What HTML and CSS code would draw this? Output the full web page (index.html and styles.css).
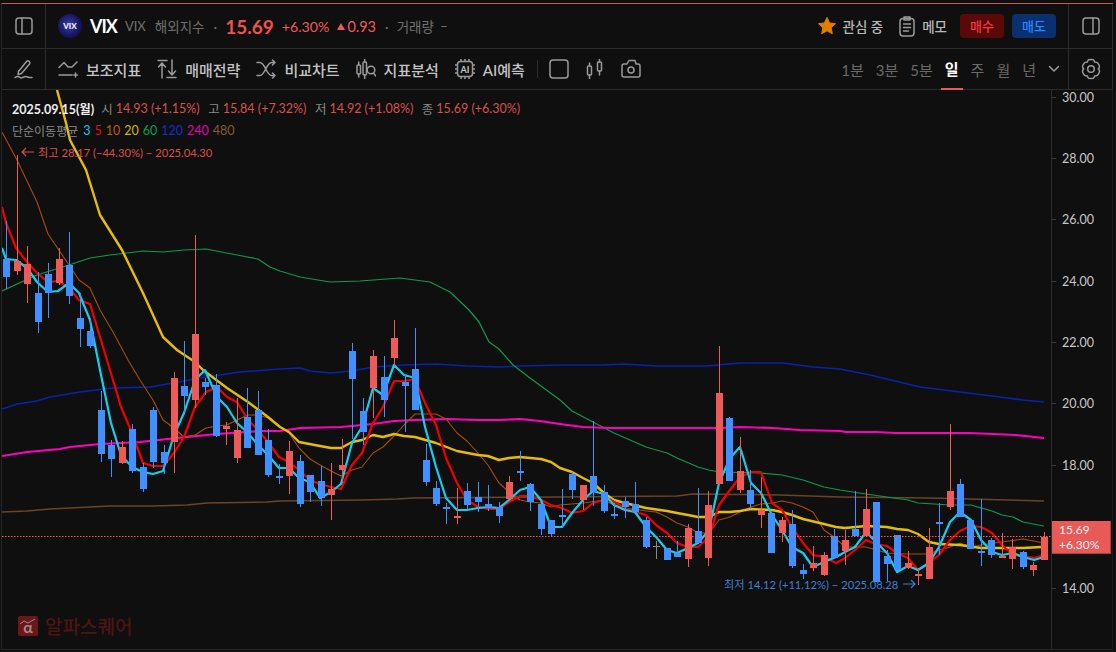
FILE: index.html
```html
<!DOCTYPE html>
<html lang="ko">
<head>
    <meta charset="UTF-8">
    <title>VIX 차트</title>
    <link rel="stylesheet" href="styles.css">
</head>
<body>
<div class="app">

    <header class="row row-info">
        <div class="side-cell">
            <svg class="icon" width="18" height="18" viewBox="0 0 18 18"><rect x="1" y="1" width="16" height="16" rx="3"/><path d="M7 1v16"/></svg>
        </div>
        <div class="row-main">
            <div class="logo">VIX</div>
            <span class="symbol">VIX</span>
            <span class="sub sub-name">VIX</span>
            <span class="sub sub-type">해외지수</span>
            <span class="dot">·</span>
            <span class="price">15.69</span>
            <span class="change">+6.30%</span>
            <span class="tri"></span>
            <span class="diff">0.93</span>
            <span class="dot dot-vol">·</span>
            <span class="sub">거래량</span>
            <span class="sub sub-dash">–</span>
            <div class="spacer"></div>
            <svg class="star" width="20" height="20" viewBox="0 0 20 20"><path d="M10 1.5l2.6 5.4 5.9.8-4.3 4.1 1.1 5.9-5.3-2.9-5.3 2.9 1.1-5.9L1.5 7.700l5.900-.8z"/></svg>
            <span class="head-link watch">관심 중</span>
            <svg class="icon memo-icon" width="16" height="21" viewBox="0 0 16 21"><rect x="1" y="2.500" width="14" height="17.500" rx="3"/><path d="M5 1h6v3H5zM4.500 8h7M4.500 11.500h7M4.500 15h5"/></svg>
            <span class="head-link memo">메모</span>
            <span class="order buy">매수</span>
            <span class="order sell">매도</span>
        </div>
        <div class="side-cell side-right">
            <svg class="icon" width="18" height="18" viewBox="0 0 18 18"><rect x="1" y="1" width="16" height="16" rx="3"/><path d="M11 1v16"/></svg>
        </div>
    </header>

    <nav class="row row-tools">
        <div class="side-cell">
            <svg class="icon" width="20" height="20" viewBox="0 0 20 20"><path d="M4.500 12.500L12.500 2.500c.8-.8 2-.8 2.800 0s.8 1.800.2 2.600L7.500 14.500l-3.500 1z"/><path d="M1 18.500c2-1.500 3.500-1.500 5 0s3.500-1 5.500-1 3 1.500 6.500 1"/></svg>
        </div>
        <div class="row-main">
            <div class="tool">
                <svg class="icon" width="20" height="20" viewBox="0 0 20 20"><path d="M1 8.500L6 3.500 10 8h4l5-5M1 16h13M15.500 16h4M17.500 14v4"/></svg>
                <span>보조지표</span>
            </div>
            <div class="tool">
                <svg class="icon" width="20" height="20" viewBox="0 0 20 20"><path d="M1 1.500h9M5 19V4M1.500 8L5 4l3.500 4M10 18.500h9M15 16V1M11.500 12l3.500 4 3.500-4"/></svg>
                <span>매매전략</span>
            </div>
            <div class="tool">
                <svg class="icon" width="20" height="20" viewBox="0 0 20 20"><path d="M1 3.500h3c5 0 6.500 13 11.500 13H19M1 16.500h3c5 0 6.500-13 11.500-13H19M16.500 1L19 3.500 16.500 6M16.500 14l2.500 2.500-2.500 2.500"/></svg>
                <span>비교차트</span>
            </div>
            <div class="tool">
                <svg class="icon" width="20" height="20" viewBox="0 0 20 20"><rect x="1" y="6" width="3.500" height="9" rx="1"/><path d="M2.700 3v3M2.700 15v3"/><rect x="7" y="3" width="3.500" height="13" rx="1"/><path d="M8.700 0v3M8.700 16v4"/><circle cx="15" cy="11" r="3.800"/><path d="M17.500 14l2.300 3"/></svg>
                <span>지표분석</span>
            </div>
            <div class="tool">
                <svg class="icon ai-icon" width="20" height="20" viewBox="0 0 20 20"><rect x="2.500" y="2.500" width="15" height="15" rx="3"/><path d="M0 6h2M0 10h2M0 14h2M18 6h2M18 10h2M18 14h2M6 0v2M10 0v2M14 0v2M6 18v2M10 18v2M14 18v2"/><text x="10" y="13.500" text-anchor="middle">AI</text></svg>
                <span>AI예측</span>
            </div>
            <i class="tool-sep"></i>
            <svg class="icon plain" width="20" height="20" viewBox="0 0 20 20"><rect x="1" y="1" width="18" height="18" rx="3"/></svg>
            <svg class="icon plain" width="18" height="20" viewBox="0 0 18 20"><rect x="1.500" y="7" width="4" height="9" rx="1"/><path d="M3.500 4v3M3.500 16v4"/><rect x="11.500" y="3" width="4" height="9" rx="1"/><path d="M13.500 0v3M13.500 12v4"/></svg>
            <svg class="icon plain" width="20" height="20" viewBox="0 0 20 20"><path d="M3 5h3l2-3.500h6l1 3.500h2c1.200 0 2 .8 2 2v9c0 1.200-.8 2-2 2H3c-1.200 0-2-.8-2-2V7c0-1.200.8-2 2-2z"/><circle cx="10" cy="11" r="3"/></svg>
            <div class="spacer"></div>
            <div class="periods">
                <span>1분</span>
                <span>3분</span>
                <span>5분</span>
                <span class="on">일</span>
                <span>주</span>
                <span>월</span>
                <span>년</span>
            </div>
            <svg class="icon chevron" width="12" height="8" viewBox="0 0 12 8"><path d="M1.500 1.500L6 6l4.500-4.500"/></svg>
        </div>
        <div class="side-cell side-right">
            <svg class="icon" width="20" height="22" viewBox="0 0 20 22"><path d="M7 2.300c.4-1.200 5.600-1.200 6 0l.6 1.600 1.800.3c1.300-.1 3.800 4.200 3 5.300L17.300 11l1.100 1.500c.8 1.100-1.700 5.400-3 5.300l-1.800.3-.6 1.600c-.4 1.200-5.600 1.200-6 0l-.6-1.600-1.800-.3c-1.300.1-3.800-4.200-3-5.300L2.700 11 1.600 9.500c-.8-1.100 1.700-5.400 3-5.300l1.800-.3z"/><circle cx="10" cy="11" r="3.300"/></svg>
        </div>
    </nav>

    <main class="chart-wrap">
        <svg id="chart" width="1111" height="559" viewBox="2 90 1111 559"></svg>

        <div class="legend">
            <div class="legend-row">
                <b class="date">2025.09.15(월)</b>
                <span class="lbl">시</span><span class="up">14.93 (+1.15%)</span>
                <span class="lbl">고</span><span class="up">15.84 (+7.32%)</span>
                <span class="lbl">저</span><span class="up">14.92 (+1.08%)</span>
                <span class="lbl">종</span><span class="up">15.69 (+6.30%)</span>
            </div>
            <div class="legend-row ma-row">
                <span class="lbl">단순이동평균</span>
                <span class="ma3">3</span>
                <span class="ma5">5</span>
                <span class="ma10">10</span>
                <span class="ma20">20</span>
                <span class="ma60">60</span>
                <span class="ma120">120</span>
                <span class="ma240">240</span>
                <span class="ma480">480</span>
            </div>
            <div class="legend-row high-note">
                <svg class="note-arrow" width="13" height="10" viewBox="0 0 13 10"><path d="M13 5H1M5 1L1 5l4 4"/></svg>
                <span>최고 28.17 (−44.30%) − 2025.04.30</span>
            </div>
        </div>

        <div class="low-note">
            <span>최저 14.12 (+11.12%) − 2025.08.28</span>
            <svg class="note-arrow" width="13" height="10" viewBox="0 0 13 10"><path d="M0 5h12M8 1l4 4-4 4"/></svg>
        </div>

        <div class="watermark">
            <div class="mark">
                <svg width="20" height="20" viewBox="0 0 20 20"><path d="M2 8l4-3 4 2 7-4"/></svg>
                <span>α</span>
            </div>
            <span class="mark-name">알파스퀘어</span>
        </div>

        <div class="price-tag">15.69<br>+6.30%</div>
    </main>
</div>
<script src="chart.js"></script>
</body>
</html>
```

FILE: styles.css
```css
* {
    box-sizing: border-box;
}
html, body {
    margin: 0;
    height: 100%;
    background-color: #0f0f0f;
    overflow: hidden;
}
body {
    padding-top: 3px;
    font-family: Lato, "Noto Sans CJK KR", sans-serif;
    color: #bbb;
}
.app {
    width: 1112px;
    height: 647px;
    margin-left: 1px;
    border-top: 1px solid #c65a50;
    border-left: 1px solid #262626;
    border-bottom: 1px solid #262626;
}
.row {
    display: flex;
    align-items: stretch;
    border-bottom: 1px solid #2c2c2c;
}
.row-info {
    height: 45px;
}
.row-tools {
    height: 41px;
}
.side-cell {
    flex: 0 0 44px;
    display: flex;
    align-items: center;
    justify-content: center;
    border-right: 1px solid #2c2c2c;
}
.side-right {
    border-right: 1px solid #2c2c2c;
    border-left: 1px solid #2c2c2c;
    flex-basis: 45px;
}
.row-main {
    flex: 1;
    display: flex;
    align-items: center;
    padding: 0 12px 0 12px;
}
.spacer {
    flex: 1;
}
.icon {
    fill: none;
    stroke: #9a9a9a;
    stroke-width: 1.5;
    stroke-linecap: round;
    stroke-linejoin: round;
    flex: none;
}

/* top row */
.logo {
    width: 24px;
    height: 24px;
    border-radius: 50%;
    background: radial-gradient(circle at 45% 45%, #3a3f9e, #15155e 60%, #0b0b38);
    color: #eee;
    font-size: 8px;
    font-weight: 900;
    line-height: 24px;
    text-align: center;
}
.symbol {
    margin-left: 8px;
    color: #fff;
    font-size: 18px;
    font-weight: 700;
    letter-spacing: -1px;
}
.sub {
    color: #6f6f6f;
    font-size: 13.5px;
}
.sub-name {
    margin-left: 8px;
    font-size: 13px;
}
.sub-type {
    margin-left: 9px;
}
.sub-dash {
    margin-left: 6px;
}
.dot {
    margin: 0 8px 0 9px;
    color: #6f6f6f;
    font-size: 14px;
}
.dot-vol {
    margin: 0 8px 0 9px;
}
.price {
    color: #f05050;
    font-size: 19px;
    font-weight: 700;
}
.change {
    margin-left: 8px;
    color: #ee5a5a;
    font-size: 14.2px;
}
.tri {
    margin-left: 8px;
    border-left: 4.5px solid transparent;
    border-right: 4.5px solid transparent;
    border-bottom: 7px solid #ee5a5a;
}
.diff {
    margin-left: 2px;
    color: #ee5a5a;
    font-size: 14.5px;
}
.star {
    fill: #e27d00;
    stroke: #e27d00;
    stroke-linejoin: round;
}
.head-link {
    margin-left: 5px;
    color: #b8b8b8;
    font-size: 13.5px;
    font-weight: 500;
}
.memo-icon {
    margin-left: 16px;
}
.memo {
    margin-left: 7px;
}
.order {
    width: 44px;
    height: 24px;
    border-radius: 4px;
    font-size: 13px;
    font-weight: 500;
    line-height: 24px;
    text-align: center;
}
.buy {
    margin-left: 13px;
    background-color: #5a0808;
    color: #f23c3c;
}
.sell {
    margin-left: 8px;
    background-color: #0a3070;
    color: #2b86ff;
}

/* tool row */
.tool {
    display: flex;
    align-items: center;
    gap: 8px;
    margin-right: 16px;
    color: #c4c4c4;
    font-size: 15px;
    font-weight: 500;
}
.ai-icon text {
    fill: #c4c4c4;
    stroke: none;
    font-family: Lato, sans-serif;
    font-size: 9px;
    font-weight: 700;
}
.tool-sep {
    width: 1px;
    height: 18px;
    margin-right: 11px;
    margin-left: -4px;
    background-color: #2c2c2c;
}
.plain {
    margin-right: 17px;
}
.periods {
    display: flex;
    align-self: stretch;
    gap: 4px;
    margin-right: 8px;
}
.periods span {
    display: flex;
    align-items: center;
    justify-content: center;
    padding: 0 4px;
    color: #6a6a6a;
    font-size: 15px;
}
.periods span.on {
    color: #fff;
    font-weight: 700;
    border-bottom: 2px solid #e85a5a;
    margin-bottom: -1px;
}
.chevron {
    margin-right: -4px;
}

/* chart */
.chart-wrap {
    position: relative;
    height: 559px;
}
#chart {
    display: block;
}
.axis-label {
    fill: #c8c8c8;
    font-family: Lato, sans-serif;
    font-size: 12.5px;
}
.legend {
    position: absolute;
    left: 10px;
    top: 7px;
    font-size: 12.5px;
}
.legend-row {
    display: flex;
    align-items: center;
    height: 22px;
    white-space: pre;
}
.date {
    color: #eee;
    margin-right: 7px;
}
.lbl {
    color: #8a8a8a;
    margin-right: 3px;
}
.up {
    color: #d9504c;
    margin-right: 8.5px;
}
.ma-row span {
    margin-right: 4px;
}
.ma-row .lbl {
    margin-right: 5px;
    font-size: 12px;
}
.ma3 { color: #10c8ee; }
.ma5 { color: #e81010; }
.ma10 { color: #bd5a10; }
.ma20 { color: #d8b408; }
.ma60 { color: #0aa050; }
.ma120 { color: #1230c8; }
.ma240 { color: #e000b0; }
.ma480 { color: #8a5a30; }
.high-note {
    padding-left: 9px;
    gap: 4px;
    color: #d9504c;
    font-size: 11.2px;
}
.note-arrow {
    fill: none;
    stroke: currentColor;
    stroke-width: 1.1;
    flex: none;
}
.low-note {
    position: absolute;
    left: 722px;
    top: 486px;
    display: flex;
    align-items: center;
    gap: 5px;
    color: #3f7fd0;
    font-size: 11.2px;
    white-space: pre;
}
.watermark {
    position: absolute;
    left: 16px;
    top: 522px;
    display: flex;
    align-items: center;
    gap: 7px;
}
.mark {
    position: relative;
    width: 20px;
    height: 20px;
    border-radius: 2px;
    background-color: #6b1717;
    color: #a08888;
    font-size: 16px;
    font-weight: 700;
    line-height: 22px;
    text-align: center;
}
.mark svg {
    position: absolute;
    left: 0;
    top: 0;
    fill: none;
    stroke: #a08888;
    stroke-width: 1;
}
.mark span {
    position: relative;
}
.mark-name {
    color: #4e1313;
    font-size: 19px;
    font-weight: 500;
}
.price-tag {
    position: absolute;
    left: 1050px;
    top: 431px;
    width: 59px;
    height: 33px;
    padding: 1px 0 0 7px;
    background-color: #e85a58;
    border-right: 1px solid #a84040;
    border-bottom: 1px solid #a84040;
    color: #f4f0f0;
    font-size: 12px;
    line-height: 15px;
}
```

FILE: chart.js
```js
// x of candle i = 6.3 + 10.48 * i
// [wick top, wick bottom, body top, body bottom, colour]
var R = "#ee5a58", B = "#4090ff", G = "#8a8a8a";
var candles = [
    [221,289,259,277,B],[155,275,261,271,R],[246,303,264,284,R],[272,333,293,322,B],[263,318,274,293,B],
    [248,285,259,283,R],[232,304,265,296,B],[293,347,318,329,B],[318,348,331,346,B],[391,462,410,454,B],
    [440,477,445,459,B],[441,464,447,463,R],[424,473,429,471,B],[463,492,467,489,B],[407,468,410,462,B],
    [445,474,452,463,B],[372,473,378,442,R],[341,412,386,396,B],[235,408,334,400,R],[378,395,382,387,B],
    [374,437,385,436,B],[422,445,426,429,R],[398,463,430,458,R],[388,448,417,448,B],[391,455,410,455,B],
    [429,477,440,475,B],[464,484,476,478,B],[441,494,451,476,R],[455,507,461,504,B],[475,502,475,492,B],
    [466,506,481,498,B],[463,520,489,495,R],[439,483,465,470,R],[343,439,351,379,B],[398,445,411,432,B],
    [350,418,356,388,R],[356,417,377,400,B],[320,367,338,358,R],[375,432,382,386,B],[328,410,369,410,B],
    [444,486,460,482,B],[481,506,488,504,B],[503,524,507,509,B],[488,524,516,518,R],[483,509,491,505,B],
    [482,512,497,502,B],[485,511,504,508,B],[502,523,507,516,B],[476,499,482,499,R],[451,481,471,473,B],
    [483,511,484,502,B],[504,535,504,529,B],[520,536,520,534,B],[489,528,515,517,B],[472,499,474,490,B],
    [485,510,485,500,R],[421,506,476,492,B],[485,513,492,511,B],[503,519,514,516,B],[497,518,501,507,B],
    [482,513,504,512,B],[517,548,520,547,B],[541,559,546,547,G],[548,560,548,560,B],[541,557,553,557,B],
    [524,567,528,559,R],[488,543,531,543,B],[491,566,505,558,R],[346,484,393,484,R],[417,481,418,481,B],
    [437,493,471,490,R],[470,509,490,504,B],[477,528,510,515,R],[513,553,513,553,B],[517,542,520,533,R],
    [510,568,524,566,B],[564,579,570,574,B],[546,571,563,568,R],[552,576,555,575,R],[529,558,536,558,B],
    [530,565,540,551,R],[491,536,529,536,B],[489,536,509,536,R],[502,582,502,582,B],[550,581,556,564,B],
    [535,570,535,570,B],[551,569,563,568,R],[568,585,574,576,R],[528,579,547,579,R],[503,555,522,524,B],
    [424,510,491,507,R],[479,517,484,517,B],[520,549,520,549,B],[499,566,551,553,B],[538,558,540,555,B],
    [533,558,556,558,R],[539,569,547,559,R],[551,569,552,567,B],[562,576,565,570,R],[532,560,537,560,R]
];

// moving averages, in page coordinates
var lines = [
    ["#6a4426", 1.5, "2,512 27,511 50,509 110,506 153,506 187,505 207,503 267,502 280,501 363,500 397,499 413,498 560,497 677,496 693,494 780,495 840,497 929,498 969,499 1044,501"],
    ["#0a22b0", 1.6, "2,409 17,404 37,401 50,397 80,392 113,388 150,387 173,383 200,378 240,372 280,369 300,368 310,371 331,373 352,371 373,367 404,365 436,364 467,366 499,367 520,366 560,365 603,365 623,364 657,366 707,366 740,363 783,363 813,367 840,369 870,375 920,387 960,392 1000,397 1023,400 1044,402"],
    ["#0d9a4e", 1.2, "2,291 37,275 69,265 90,258 110,255 143,251 163,252 184,250 206,249 237,255 258,259 270,267 280,271 300,277 330,282 360,281 400,278 430,282 450,292 469,310 479,322 489,342 499,349 513,365 530,378 560,400 572,411 593,422 614,433 646,447 667,453 677,458 698,467 709,470 719,472 761,473 782,475 803,480 824,487 840,490 866,494 908,500 918,503 950,505 971,505 992,511 1002,515 1013,517 1023,522 1044,526"],
    ["#ff00c0", 2.2, "2,456 27,452 60,449 70,447 100,444 140,442 177,438 217,434 263,431 280,431 300,428 341,427 373,424 394,421 415,420 447,419 478,420 500,420 520,419 540,421 560,424 583,427 610,428 720,428 740,427 773,428 800,430 840,431 846,432 876,432 896,433 969,433 1016,435 1044,438"],
    ["#a84c0a", 1.1, "2,132 17,160 37,202 48,234 69,265 79,280 90,288 100,310 113,332 128,360 140,380 153,400 163,420 174,428 184,437 195,435 206,428 217,426 227,425 237,420 248,415 258,415 268,418 280,427 289,433 299,448 310,459 320,465 331,471 341,476 352,470 362,467 373,453 383,447 394,436 404,425 415,414 425,414 436,414 446,419 457,433 467,441 478,453 488,465 499,483 509,492 520,500 530,502 541,503 551,507 560,505 583,503 604,500 614,505 625,508 646,511 656,512 667,517 677,523 688,527 698,533 709,533 719,520 730,517 740,512 751,507 761,504 772,503 782,501 792,503 803,507 813,512 824,530 834,537 845,547 866,547 887,553 908,554 929,554 939,550 950,547 960,543 971,547 981,545 1002,542 1023,539 1044,543"],
    ["#e6bc08", 2.4, "57,90 66,123 70,140 86,170 100,215 122,250 143,293 163,337 177,350 195,362 203,370 227,388 248,402 268,417 280,427 289,432 299,442 320,446 331,448 341,448 352,442 362,440 373,435 383,437 394,434 404,436 415,437 436,443 457,451 478,455 488,456 499,460 509,458 520,457 541,459 551,462 560,468 572,472 583,478 593,483 604,493 614,500 625,503 646,508 667,511 677,513 688,515 698,517 709,517 719,512 730,512 740,511 751,509 772,510 782,512 792,515 803,519 824,524 836,527 845,528 866,526 887,527 897,529 908,530 918,534 929,542 939,544 960,545 981,548 1002,548 1023,548 1041,547"],
    ["#f00000", 2.2, "2,207 6,223 16,248 27,262 37,273 48,282 58,281 69,288 79,300 90,304 100,337 110,370 121,407 132,433 143,463 153,466 163,466 174,453 184,437 195,407 206,392 217,387 227,397 237,402 248,420 258,430 268,442 279,457 289,462 299,470 310,480 320,484 331,487 341,489 352,465 362,453 373,423 383,407 394,381 404,381 415,379 425,403 436,425 446,458 457,483 467,500 478,507 488,509 499,509 509,502 520,496 530,496 541,500 551,505 562,508 572,513 583,511 593,503 604,500 609,499 625,508 635,512 646,515 656,525 667,533 677,543 688,547 698,547 709,537 719,505 730,490 740,477 751,472 761,472 772,503 782,510 792,527 803,543 813,555 824,557 836,563 845,558 855,550 866,540 876,544 887,546 897,553 908,558 918,570 929,563 939,555 950,540 960,531 971,526 981,527 992,533 1002,545 1013,555 1023,556 1034,558 1044,555"],
    ["#10d0f0", 2.2, "2,248 6,259 16,260 27,268 37,282 48,292 58,291 69,283 79,293 90,320 100,370 111,423 121,455 132,467 143,472 153,474 163,471 174,435 184,413 195,380 205,370 217,397 227,407 237,423 248,433 258,445 268,455 279,468 289,468 299,478 310,482 320,498 331,492 341,484 352,443 362,427 373,388 383,395 394,365 404,375 415,378 425,427 436,467 446,498 457,510 467,510 478,508 488,507 499,508 509,500 520,490 530,487 541,500 551,527 562,527 572,513 583,500 593,491 604,494 614,505 625,510 635,512 646,527 656,537 667,550 677,553 688,548 698,543 709,530 719,483 730,458 740,447 751,483 761,493 772,515 782,530 792,547 803,553 813,567 824,562 836,557 845,552 855,547 866,532 876,542 887,553 897,572 908,566 918,570 929,563 939,547 950,522 960,512 971,520 981,540 992,552 1002,555 1013,553 1023,557 1034,560 1044,557"]
];

var ticks = [[97,"30.00"],[158,"28.00"],[219,"26.00"],[281,"24.00"],[342,"22.00"],[403,"20.00"],[465,"18.00"],[588,"14.00"]];

var svg = "";
lines.forEach(function (l) {
    svg += '<polyline points="' + l[2] + '" fill="none" stroke="' + l[0] + '" stroke-width="' + l[1] + '" stroke-linejoin="round"/>';
});
candles.forEach(function (c, i) {
    var x = Math.round(6.3 + 10.48 * i);
    svg += '<rect x="' + x + '" y="' + c[0] + '" width="1" height="' + (c[1] - c[0]) + '" fill="' + c[4] + '" shape-rendering="crispEdges"/>';
    svg += '<rect x="' + (x - 3) + '" y="' + c[2] + '" width="7" height="' + (c[3] - c[2]) + '" fill="' + c[4] + '" shape-rendering="crispEdges"/>';
});
svg += '<line x1="2" y1="536.500" x2="1051" y2="536.500" stroke="#ff5a50" stroke-dasharray="1.500 1.500"/>';
svg += '<line x1="1051.500" y1="90" x2="1051.500" y2="649" stroke="#2c2c2c"/>';
svg += '<line x1="1112.500" y1="90" x2="1112.500" y2="649" stroke="#1a1a1a"/>';
ticks.forEach(function (t) {
    svg += '<line x1="1052" y1="' + (t[0] + 0.5) + '" x2="1056" y2="' + (t[0] + 0.5) + '" stroke="#3a3a3a"/>';
    svg += '<text class="axis-label" x="1062" y="' + (t[0] + 4.5) + '">' + t[1] + '</text>';
});
document.getElementById("chart").innerHTML = svg;
```
